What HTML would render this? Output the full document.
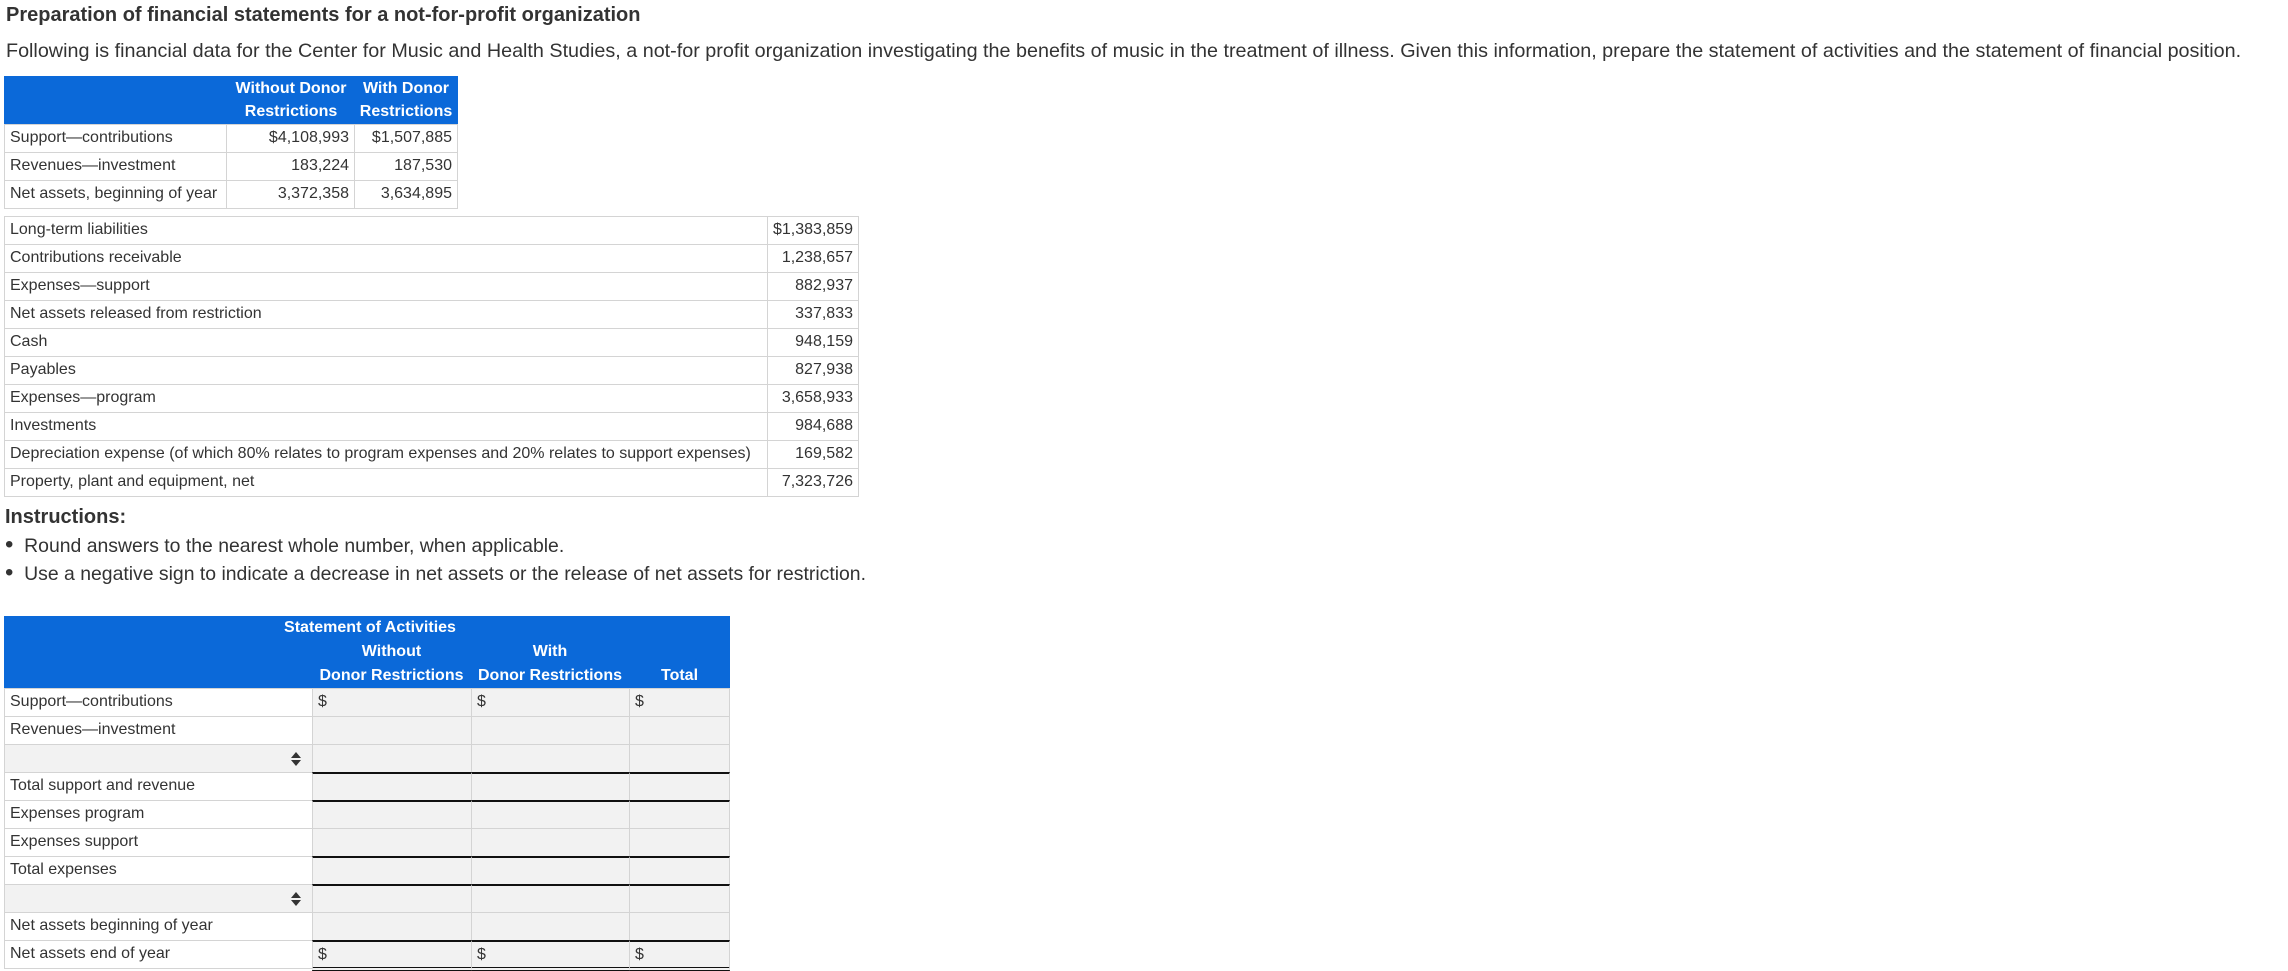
<!DOCTYPE html>
<html><head><meta charset="utf-8"><style>
*{margin:0;padding:0;box-sizing:border-box}
body{width:2288px;height:971px;background:#fff;font-family:"Liberation Sans",sans-serif;color:#333;position:relative;overflow:hidden}
.a{position:absolute;white-space:nowrap}
.c{position:absolute;border:1px solid #d4d4d4;font-size:16px;line-height:26px;padding:0 5px;white-space:nowrap;color:#333}
.r{text-align:right}
.h{position:absolute;background:#0b69d9;color:#fff;font-weight:bold;font-size:16px;white-space:nowrap}
.g{background:#f2f2f2}
</style></head><body>
<div class="a" style="left:6px;top:2px;font-size:20px;font-weight:bold;line-height:26px">Preparation of financial statements for a not-for-profit organization</div>
<div class="a" style="left:6px;top:38px;font-size:19.75px;line-height:26px">Following is financial data for the Center for Music and Health Studies, a not-for profit organization investigating the benefits of music in the treatment of illness. Given this information, prepare the statement of activities and the statement of financial position.</div>

<div class="h" style="left:4px;top:76px;width:454px;height:48px"></div>
<div class="a" style="left:228px;top:77px;width:126px;text-align:center;color:#fff;font-weight:bold;font-size:16px;line-height:23px">Without Donor<br>Restrictions</div>
<div class="a" style="left:354px;top:77px;width:104px;text-align:center;color:#fff;font-weight:bold;font-size:16px;line-height:23px">With Donor<br>Restrictions</div>
<div id="t1"></div>
<div id="t2"></div>

<div class="a" style="left:5px;top:504px;font-size:20px;font-weight:bold;line-height:26px">Instructions:</div>
<div class="a" style="left:5px;top:532px;font-size:19.4px;line-height:26px"><span style="font-size:24px">•</span>&nbsp; Round answers to the nearest whole number, when applicable.</div>
<div class="a" style="left:5px;top:560px;font-size:19.4px;line-height:26px"><span style="font-size:24px">•</span>&nbsp; Use a negative sign to indicate a decrease in net assets or the release of net assets for restriction.</div>

<div class="h" style="left:4px;top:616px;width:726px;height:72px"></div>
<div class="a" style="left:230px;top:616px;width:280px;text-align:center;color:#fff;font-weight:bold;font-size:16px;line-height:24px">Statement of Activities</div>
<div class="a" style="left:312px;top:640px;width:159px;text-align:center;color:#fff;font-weight:bold;font-size:16px;line-height:24px">Without<br>Donor Restrictions</div>
<div class="a" style="left:471px;top:640px;width:158px;text-align:center;color:#fff;font-weight:bold;font-size:16px;line-height:24px">With<br>Donor Restrictions</div>
<div class="a" style="left:629px;top:664px;width:101px;text-align:center;color:#fff;font-weight:bold;font-size:16px;line-height:24px">Total</div>
<div id="t3"></div>
<script>
function cell(x,y,w,h,t,cls,extra){return '<div class="c '+(cls||'')+'" style="left:'+x+'px;top:'+y+'px;width:'+w+'px;height:'+h+'px;'+(extra||'')+'">'+t+'</div>'}
var s='';
var r1=[["Support—contributions","$4,108,993","$1,507,885"],["Revenues—investment","183,224","187,530"],["Net assets, beginning of year","3,372,358","3,634,895"]];
r1.forEach(function(r,i){var y=124+i*28;s+=cell(4,y,223,29,r[0])+cell(226,y,129,29,r[1],'r')+cell(354,y,104,29,r[2],'r');});
document.getElementById('t1').innerHTML=s;s='';
var r2=[["Long-term liabilities","$1,383,859"],["Contributions receivable","1,238,657"],["Expenses—support","882,937"],["Net assets released from restriction","337,833"],["Cash","948,159"],["Payables","827,938"],["Expenses—program","3,658,933"],["Investments","984,688"],["Depreciation expense (of which 80% relates to program expenses and 20% relates to support expenses)","169,582"],["Property, plant and equipment, net","7,323,726"]];
r2.forEach(function(r,i){var y=216+i*28;s+=cell(4,y,764,29,r[0])+cell(767,y,92,29,r[1],'r');});
document.getElementById('t2').innerHTML=s;s='';
var r3=["Support—contributions","Revenues—investment","§","Total support and revenue","Expenses program","Expenses support","Total expenses","§","Net assets beginning of year","Net assets end of year"];
var thick={3:1,4:1,6:1,7:1,9:1};
var arrow='<svg width="10" height="14" style="position:absolute;left:286px;top:7px" viewBox="0 0 10 14"><path d="M5 0L10 6H0Z M5 14L0 8H10Z" fill="#333"/></svg>';
r3.forEach(function(t,i){var y=688+i*28;
 if(t=="§"){s+=cell(4,y,309,29,arrow,'g');}else s+=cell(4,y,309,29,t);
 var d=(i==0||i==9)?'$':'';
 var ex=thick[i]?'border-top:2px solid #111;':'';
 if(i==9)ex+='border-bottom:4px double #111;height:31px;';
 s+=cell(312,y,160,29,d,'g',ex)+cell(471,y,159,29,d,'g',ex)+cell(629,y,101,29,d,'g',ex);
});
document.getElementById('t3').innerHTML=s;
</script>
</body></html>
